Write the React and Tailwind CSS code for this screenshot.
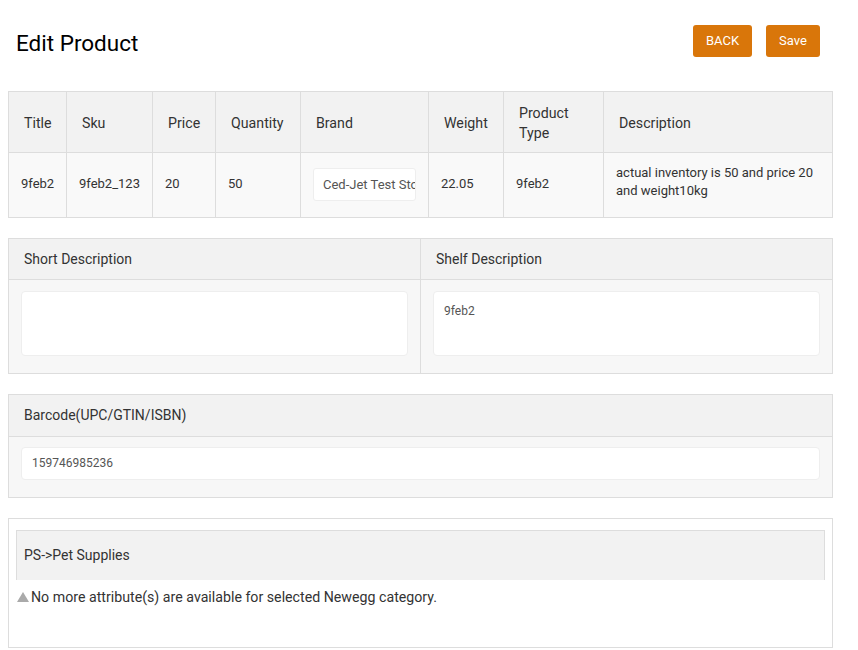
const columns = [
  { label: "Title", width: "w-[58px]" },
  { label: "Sku", width: "w-[86px]" },
  { label: "Price", width: "w-[63px]" },
  { label: "Quantity", width: "w-[85px]" },
  { label: "Brand", width: "w-[128px]" },
  { label: "Weight", width: "w-[75px]" },
  { label: "Product Type", width: "w-[100px]" },
  { label: "Description", width: "" },
];

function App() {
  return (
    <div className="min-h-[650px] bg-white font-['Roboto',sans-serif] text-[#333]">
      {/* Page header */}
      <div className="flex items-start justify-between pl-4 pr-[38px] pt-[25px] h-[91px]">
        <h1 className="mt-[2px] text-[22.5px] leading-8 text-black">Edit Product</h1>
        <div className="flex gap-[14px]">
          <button className="h-8 w-[59px] rounded-[3px] bg-[#d9760a] text-[13px] text-white">
            BACK
          </button>
          <button className="h-8 w-[54px] rounded-[3px] bg-[#d9760a] text-[13px] text-white">
            Save
          </button>
        </div>
      </div>

      <div className="px-2 w-[841px]">
        {/* Product table */}
        <table className="w-full border-collapse border border-[#ddd] table-fixed">
          <thead>
            <tr className="h-[61px] bg-[#f2f2f2]">
              {columns.map((col) => (
                <th
                  key={col.label}
                  className={`${col.width} border border-[#ddd] px-[15px] pt-[2px] text-left text-[14.2px] font-normal leading-5 text-[#333]`}
                >
                  {col.label === "Product Type" ? (
                    <span className="block w-[60px]">Product Type</span>
                  ) : (
                    col.label
                  )}
                </th>
              ))}
            </tr>
          </thead>
          <tbody>
            <tr className="h-[65px] bg-[#f9f9f9] text-[13px]">
              <td className="border border-[#ddd] px-3 pb-[2px]">9feb2</td>
              <td className="border border-[#ddd] px-3 pb-[2px]">9feb2_123</td>
              <td className="border border-[#ddd] px-3 pb-[2px]">20</td>
              <td className="border border-[#ddd] px-3 pb-[2px]">50</td>
              <td className="border border-[#ddd] px-3 pb-[2px]">
                <div className="h-[33px] w-[103px] overflow-hidden whitespace-nowrap rounded-[3px] border border-[#eee] bg-white pl-[9px] text-[13px] leading-[31px] text-[#555]">
                  Ced-Jet Test Store
                </div>
              </td>
              <td className="border border-[#ddd] px-3 pb-[2px]">22.05</td>
              <td className="border border-[#ddd] px-3 pb-[2px]">9feb2</td>
              <td className="border border-[#ddd] px-3 pb-[6px] leading-[18px]">
                actual inventory is 50 and price 20 and weight10kg
              </td>
            </tr>
          </tbody>
        </table>

        {/* Descriptions */}
        <div className="mt-5 grid grid-cols-[412px_1fr] border border-[#ddd] bg-[#f7f7f7]">
          <div className="border-r border-[#ddd]">
            <div className="flex h-[41px] items-center border-b border-[#ddd] bg-[#f2f2f2] px-[15px] text-[14px]">
              Short Description
            </div>
            <div className="px-3 pt-[11px] pb-[17px]">
              <div className="h-[65px] rounded-[4px] border border-[#eee] bg-white" />
            </div>
          </div>
          <div>
            <div className="flex h-[41px] items-center border-b border-[#ddd] bg-[#f2f2f2] px-[15px] text-[14px]">
              Shelf Description
            </div>
            <div className="px-3 pt-[11px] pb-[17px]">
              <div className="h-[65px] rounded-[4px] border border-[#eee] bg-white px-[10px] pt-[10px] text-[12px] text-[#555]">
                9feb2
              </div>
            </div>
          </div>
        </div>

        {/* Barcode */}
        <div className="mt-5 border border-[#ddd] bg-[#f7f7f7]">
          <div className="flex h-[42px] items-center border-b border-[#ddd] bg-[#f2f2f2] px-[15px] text-[14px]">
            Barcode(UPC/GTIN/ISBN)
          </div>
          <div className="px-3 pt-[10px] pb-[17px]">
            <div className="h-[33px] rounded-[4px] border border-[#eee] bg-white px-[10px] text-[12px] leading-[31px] text-[#555]">
              159746985236
            </div>
          </div>
        </div>

        {/* Category attributes */}
        <div className="mt-5 h-[130px] border border-[#ddd] bg-white px-[7px] pt-[11px]">
          <div className="flex h-[50px] items-center border border-b-0 border-[#ddd] bg-[#f2f2f2] px-[7px] text-[14px]">
            PS-&gt;Pet Supplies
          </div>
          <div className="mt-[7px] flex items-center text-[14.2px] leading-5">
            <svg width="14" height="12" viewBox="0 0 14 12" className="mr-[1px]">
              <path d="M7 1 L13 11 L1 11 Z" fill="#aaa" />
            </svg>
            No more attribute(s) are available for selected Newegg category.
          </div>
        </div>
      </div>
    </div>
  );
}

export default App;
